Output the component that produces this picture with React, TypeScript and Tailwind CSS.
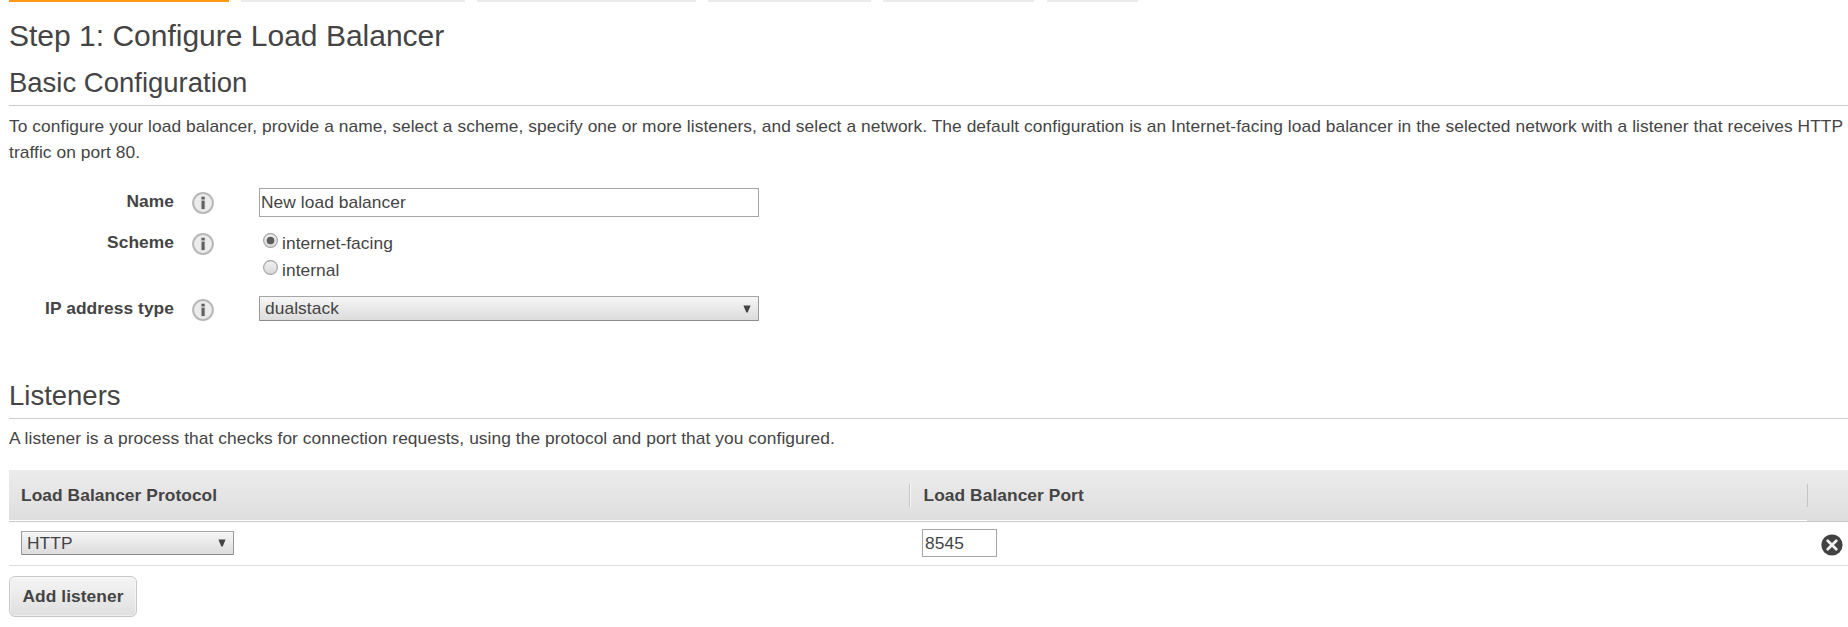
import type { ReactNode } from 'react';

function InfoIcon() {
  return (
    <svg width="22" height="22" viewBox="0 0 22 22" className="block shrink-0">
      <circle cx="11" cy="11" r="9.9" fill="#ececec" stroke="#b8b8b8" strokeWidth="2" />
      <rect x="8.7" y="4.2" width="4.6" height="13.6" rx="1" fill="#d8d8d8" />
      <rect x="9.5" y="4.8" width="3.2" height="2.6" fill="#606060" />
      <rect x="9.6" y="8.7" width="3" height="8.3" fill="#606060" />
    </svg>
  );
}

function DeleteIcon() {
  return (
    <svg width="22" height="22" viewBox="0 0 22 22" className="block">
      <circle cx="11" cy="11" r="10.6" fill="#424242" />
      <path d="M6.7 6.7 L15.3 15.3 M15.3 6.7 L6.7 15.3" stroke="#f2f2f2" strokeWidth="2.7" strokeLinecap="round" />
    </svg>
  );
}

function SelectBox({ value, className }: { value: string; className: string }) {
  return (
    <div
      className={`flex items-center justify-between rounded-[1px] border border-t-[#a6a6a6] border-x-[#999] border-b-[#8c8c8c] bg-linear-to-b from-[#f6f6f6] to-[#dcdcdc] pl-[5px] pr-[7px] ${className}`}
    >
      <span className="h-[22px] self-start leading-[22px]">{value}</span>
      <svg width="8" height="8" viewBox="0 0 8 8" className="block">
        <path d="M0.4 0.5 H7.6 L4.7 7.5 H3.3 Z" fill="#444" />
      </svg>
    </div>
  );
}

function Radio({ label, checked }: { label: string; checked?: boolean }) {
  return (
    <label className="flex h-[27px] items-start pl-1">
      <svg width="15" height="15" viewBox="0 0 15 15" className="block">
        <defs>
          <linearGradient id="radioFill" x1="0" y1="0" x2="0" y2="1">
            <stop offset="0" stopColor="#f2f2f2" />
            <stop offset="1" stopColor="#d8d8d8" />
          </linearGradient>
        </defs>
        <circle cx="7.5" cy="7.5" r="6.9" fill="url(#radioFill)" stroke="#a3a3a3" strokeWidth="1.1" />
        {checked && <circle cx="7.5" cy="7.5" r="3.8" fill="#5c5c5c" />}
      </svg>
      <span className="ml-[4px] mt-px leading-[18px]">{label}</span>
    </label>
  );
}

function Field({ label, className, children }: { label: string; className: string; children: ReactNode }) {
  return (
    <div className={`flex items-start ${className}`}>
      <div className="w-[165px] text-right font-bold leading-[18px]">{label}</div>
      <div className="ml-[18px] w-[67px]">
        <InfoIcon />
      </div>
      {children}
    </div>
  );
}

function SectionTitle({ children }: { children: ReactNode }) {
  return (
    <h2 className="h-10 border-b border-[#ccc] pt-px text-[27.49px] leading-8 tracking-normal">{children}</h2>
  );
}

export default function App() {
  return (
    <div className="h-[627px] w-[1848px] overflow-hidden bg-white pl-[9px] font-['Liberation_Sans',Arial,sans-serif] text-[17.35px] tracking-[0.068px] text-[#444]">
      <div className="flex h-[2px]">
        <div className="w-[220px] bg-[#ff9911]" />
        <div className="ml-3 w-[224px] bg-[#ebebeb]" />
        <div className="ml-3 w-[219px] bg-[#ebebeb]" />
        <div className="ml-3 w-[163px] bg-[#ebebeb]" />
        <div className="ml-3 w-[151px] bg-[#ebebeb]" />
        <div className="ml-[13px] w-[91px] bg-[#ebebeb]" />
      </div>

      <h1 className="mt-[17px] text-[30px] leading-[34px] tracking-normal">Step 1: Configure Load Balancer</h1>
      <div className="mt-[13px]">
        <SectionTitle>Basic Configuration</SectionTitle>
      </div>
      <p className="mt-[7px] h-[52px] leading-[26px]">
        To configure your load balancer, provide a name, select a scheme, specify one or more listeners, and select a
        network. The default configuration is an Internet-facing load balancer in the selected network with a listener
        that receives HTTP traffic on port 80.
      </p>

      <Field label="Name" className="mt-[27px] h-[41px]">
        <input
          type="text"
          defaultValue="New load balancer"
          className="-mt-1 h-[29px] w-[500px] border border-[#a6a6a6] bg-white px-px outline-none"
        />
      </Field>
      <Field label="Scheme" className="h-[66px]">
        <div>
          <Radio label="internet-facing" checked />
          <Radio label="internal" />
        </div>
      </Field>
      <Field label="IP address type" className="h-[80px]">
        <SelectBox value="dualstack" className="-mt-[3px] h-[25px] w-[500px]" />
      </Field>

      <SectionTitle>Listeners</SectionTitle>
      <p className="mt-[6px] h-[45px] leading-[26px]">
        A listener is a process that checks for connection requests, using the protocol and port that you configured.
      </p>

      <div className="flex h-[52px] border-b border-[#c8c8c8] font-bold leading-[50px]">
        <div className="h-[51px] w-[900px] border-b border-white bg-linear-to-b from-[#ececec] to-[#dedede] pl-[12px]">
          Load Balancer Protocol
        </div>
        <div className="flex h-[51px] w-[898px] items-start border-b border-white bg-linear-to-b from-[#ececec] to-[#dedede]">
          <div className="mt-[14px] h-[23px] w-[2px] border-r border-l border-l-[#c4c4c4] border-r-[#f8f8f8]" />
          <div className="ml-[12.5px]">Load Balancer Port</div>
        </div>
        <div className="h-[51px] flex-1 bg-linear-to-b from-[#ececec] to-[#dedede]">
          <div className="mt-[14px] h-[23px] w-px bg-[#c4c4c4]" />
        </div>
      </div>

      <div className="flex h-[44px] items-start border-b border-[#dedede]">
        <div className="w-[901px] pl-3 pt-[9px]">
          <SelectBox value="HTTP" className="h-[24px] w-[213px]" />
        </div>
        <div className="w-[911px] pl-3 pt-[7px]">
          <input
            type="text"
            defaultValue="8545"
            className="block h-[28px] w-[75px] border border-[#a6a6a6] bg-white pl-[2px] outline-none"
          />
        </div>
        <div className="mt-[11.5px]">
          <DeleteIcon />
        </div>
      </div>

      <button className="mt-[10px] block h-[41px] w-[128px] rounded-[6px] border border-[#c8c8c8] bg-linear-to-b from-[#f5f5f5] to-[#dfdfdf] font-bold leading-[39px] shadow-[inset_0_0_0_1px_rgba(255,255,255,0.45)]">
        Add listener
      </button>
    </div>
  );
}
